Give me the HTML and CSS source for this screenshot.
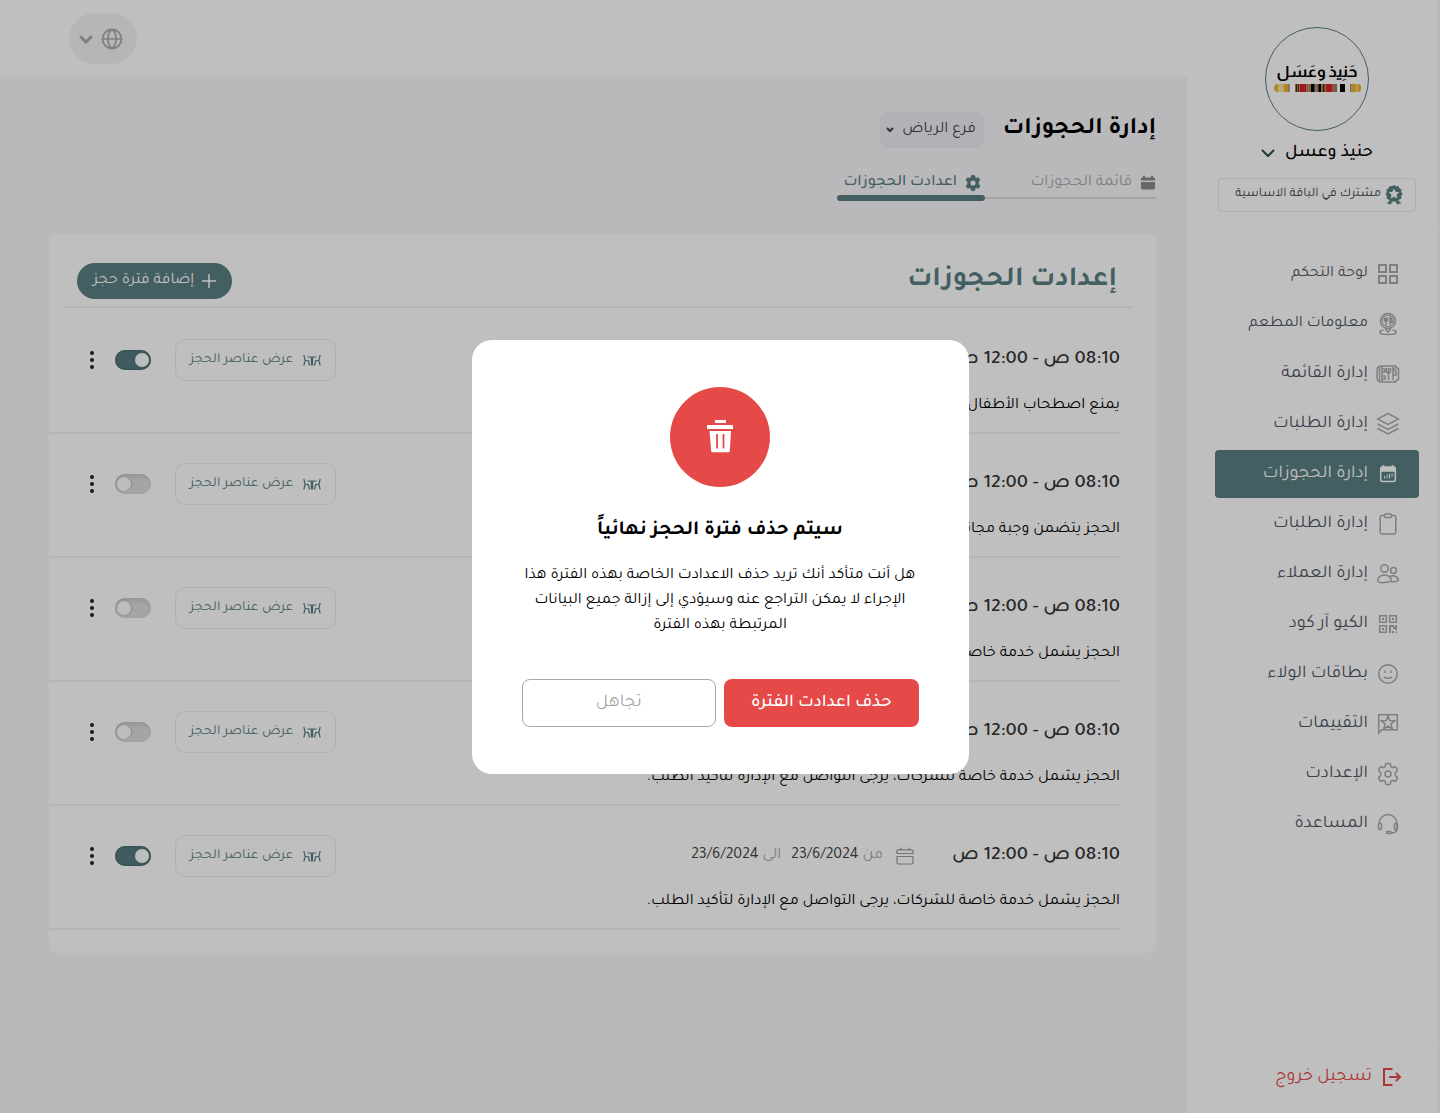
FILE: index.html
```html
<!DOCTYPE html>
<html lang="ar" dir="rtl">
<head>
<meta charset="utf-8">
<meta name="viewport" content="width=device-width, initial-scale=1">
<title>إدارة الحجوزات</title>
<link rel="stylesheet" href="styles.css">
</head>
<body>
<svg class="sprite" aria-hidden="true">
  <symbol id="i-table" viewBox="0 0 18 12">
    <path d="M.8 1l1.400 5.500L.8 11.500M2.200 6.500h3l1.300 5M17.200 1l-1.400 5.500 1.400 5M15.800 6.500h-3l-1.300 5M4.500 3h9M8.400 3v8.500M9.600 3v8.500" fill="none" stroke="currentColor" stroke-width="1.200"/>
  </symbol>
  <symbol id="i-dates" viewBox="0 0 18 18">
    <path d="M1 6.500V4a1.200 1.200 0 0 1 1.200-1.200h13.600A1.200 1.200 0 0 1 17 4v2.500zM1 9.500h16v6.300a1.200 1.200 0 0 1-1.200 1.200H2.200A1.200 1.200 0 0 1 1 15.800zM5 .5v2.300M13 .5v2.300" fill="none" stroke="currentColor" stroke-width="1.200"/>
  </symbol>
  <symbol id="i-dots" viewBox="0 0 4 18">
    <circle cx="2" cy="2" r="2"/><circle cx="2" cy="9" r="2"/><circle cx="2" cy="16" r="2"/>
  </symbol>
  <symbol id="i-gear" viewBox="0 0 24 24">
    <path d="M9.600 2.300a1 1 0 0 1 1-.8h2.800a1 1 0 0 1 1 .8l.4 2.300 1.700 1 2.200-.8a1 1 0 0 1 1.200.4l1.400 2.400a1 1 0 0 1-.2 1.300L19.300 10.400v3.200l1.800 1.500a1 1 0 0 1 .2 1.300l-1.400 2.400a1 1 0 0 1-1.200.4l-2.200-.8-1.700 1-.4 2.300a1 1 0 0 1-1 .8h-2.800a1 1 0 0 1-1-.8l-.4-2.300-1.700-1-2.200.8a1 1 0 0 1-1.200-.4l-1.400-2.400a1 1 0 0 1 .2-1.300l1.800-1.500v-3.200L2.900 8.900a1 1 0 0 1-.2-1.300l1.400-2.400a1 1 0 0 1 1.200-.4l2.200.8 1.700-1z"/>
  </symbol>
</svg>

<div class="app">
  <aside class="sidebar">
    <div class="brand">
      <div class="logo">
        <span class="logo-name">حَنِيذ وعَسَل</span>
        <svg class="logo-band" viewBox="0 0 261 24" aria-hidden="true">
          <path d="M12 0v24a12 12 0 0 1 0-24z" fill="#f0b429"/><path d="M12 0h17v24H12z" fill="#f7df9c"/><path d="M29 0h13v24H29z" fill="#f0b429"/><path d="M42 0h5v24h-5z" fill="#a08a96"/>
          <path d="M63 0h15v24H63z" fill="#a9823a"/><path d="M66 0h3v24h-3zM73 0h2v24h-2z" fill="#3a2a1a"/><path d="M78 0h20v24H78z" fill="#d8222f"/><path d="M98 0h5v24h-5z" fill="#9b8193"/><path d="M103 0h8v24h-8z" fill="#b2832b"/><path d="M111 0h11v24h-11z"/><path d="M122 0h6v24h-6z" fill="#8b8188"/><path d="M128 0h5v24h-5z" fill="#a8792a"/><path d="M133 0h9v24h-9z"/><path d="M142 0h13v24h-13z" fill="#b2832b"/><path d="M147 0h4v24h-4z" fill="#3a2a1a"/><path d="M155 0h21v24h-21z" fill="#d8222f"/><path d="M176 0h13v24h-13z" fill="#a9823a"/><path d="M184 0h5v24h-5z" fill="#8c7787"/>
          <path d="M198 0h15v24h-15z"/>
          <path d="M228 0h5v24h-5z" fill="#a08a96"/><path d="M233 0h14v24h-14z" fill="#f0b429"/><path d="M247 0h3v24h-3z" fill="#f7df9c"/><path d="M250 0a12 12 0 0 1 0 24z" fill="#f0b429"/>
        </svg>
      </div>
      <button class="account" type="button">
        <span>حنيذ وعسل</span>
        <svg width="14" height="8" viewBox="0 0 14 8" aria-hidden="true"><path d="M1 1l6 6 6-6" fill="none" stroke="currentColor" stroke-width="2"/></svg>
      </button>
      <p class="plan">
        <svg width="18" height="20" viewBox="0 0 18 20" aria-hidden="true">
          <path d="M9 0l2 1.300 2.400-.2 1 2.200 2.100 1.200-.3 2.400L17.500 9l-1.300 2 .2 2.400-2.200 1L13 16.500H5l-1.200-2.100-2.200-1 .2-2.400L.5 9l1.300-2.100-.3-2.400 2.100-1.200 1-2.200L7 1.300z" fill="currentColor"/>
          <path d="M9 3.500l1.600 3.300 3.600.5-2.600 2.500.6 3.600L9 11.700l-3.200 1.700.6-3.600-2.600-2.500 3.600-.5z" fill="#fff"/>
          <path d="M4 16l-2.500 2.800 2.500-.2.800 1.400L8 16.800M14 16l2.500 2.800-2.500-.2-.8 1.400-3.200-3.200" fill="currentColor"/>
        </svg>
        <span>مشترك في الباقة الاساسية</span>
      </p>
    </div>

    <nav class="menu" aria-label="القائمة الرئيسية">
      <a class="menu-link menu-link-small" href="#dashboard">
        <svg class="menu-icon" viewBox="0 0 24 24"><path d="M3 3h7v7H3zM14 3h7v7h-7zM3 14h7v7H3zM14 14h7v7h-7z" stroke-width="2"/></svg>
        <span>لوحة التحكم</span>
      </a>
      <a class="menu-link menu-link-small" href="#restaurant">
        <svg class="menu-icon" viewBox="0 0 24 24"><circle cx="12" cy="9" r="7.500"/><circle cx="12" cy="9" r="5.800" stroke-width="1"/><path d="M8.500 5.500v3q1.500 2 3 0v-3M10 5.500v8M14 13.500v-8q2.500 1.500 2 5h-2M9 16.500l3 3.500 3-3.500"/><path d="M7.500 18C1.500 19 2 22.500 12 22.500S22.500 19 16.500 18"/></svg>
        <span>معلومات المطعم</span>
      </a>
      <a class="menu-link" href="#menu">
        <svg class="menu-icon" viewBox="0 0 24 24"><path d="M6 4h13.500q0 2 3 2.500v11q-3 .5-3 2.500H6zM6 4Q1 4 1 8v8q0 4 5 4M3.500 5v14M6 7h3v3H6M6 14h3v3H6"/><path d="M10.500 6v4q2 2.500 4 0V6M12.500 6v12M17 18V6q3.500 2 3 7h-3"/></svg>
        <span>إدارة القائمة</span>
      </a>
      <a class="menu-link" href="#orders">
        <svg class="menu-icon" viewBox="0 0 24 24"><path d="M12 1.500l10.500 5.500L12 12.500 1.500 7zM1.500 12L12 17.500 22.500 12M1.500 16.500L12 22l10.500-5.500"/></svg>
        <span>إدارة الطلبات</span>
      </a>
      <a class="menu-link is-active" href="#bookings" aria-current="page">
        <svg class="menu-icon" viewBox="0 0 24 24"><path d="M4.700 9V6.500A1.500 1.500 0 0 1 6.200 5h11.600a1.500 1.500 0 0 1 1.500 1.500V9z" fill="currentColor"/><path d="M4.700 9v9a1.500 1.500 0 0 0 1.500 1.500h11.600a1.500 1.500 0 0 0 1.500-1.500V9M7.500 3v3M16.500 3v3"/><path d="M8.500 16.500V14M11 16.500v-4M13.500 16.500v-5M16 15v-3.500" stroke-width="1"/></svg>
        <span>إدارة الحجوزات</span>
      </a>
      <a class="menu-link" href="#requests">
        <svg class="menu-icon" viewBox="0 0 24 24"><path d="M8.500 3.500H6A1.800 1.800 0 0 0 4.200 5.300v15A1.800 1.800 0 0 0 6 22h12a1.800 1.800 0 0 0 1.800-1.700v-15A1.800 1.800 0 0 0 18 3.500h-2.500"/><rect x="8.500" y="2" width="7" height="3.500" rx="1.200"/></svg>
        <span>إدارة الطلبات</span>
      </a>
      <a class="menu-link" href="#customers">
        <svg class="menu-icon" viewBox="0 0 24 24"><circle cx="8.500" cy="6.500" r="3.700"/><circle cx="17.500" cy="8.500" r="2.900"/><path d="M1.700 18.500c0-3 3-5.500 6.800-5.500s6.800 2.500 6.800 5.500c0 1.800-13.600 3.800-13.600 0zM14 14.500c4-1.800 8.300.5 8.300 3.500 0 1.200-2.800 1.900-7 1.600"/></svg>
        <span>إدارة العملاء</span>
      </a>
      <a class="menu-link" href="#qr">
        <svg class="menu-icon" viewBox="0 0 24 24"><path d="M3.700 3.700h6.600v6.600H3.700zM13.700 3.700h6.600v6.600h-6.600zM3.700 13.700h6.600v6.600H3.700z"/><path d="M6 6h2v2H6zM16 6h2v2h-2zM6 16h2v2H6zM13 13h5v2h1v-2h2v5h-2v-1h-2v-2h-2v6h-2zM16 19h2v2h-2zM19.500 19.500H21V21h-1.500z" fill="currentColor" stroke="none"/></svg>
        <span>الكيو آر كود</span>
      </a>
      <a class="menu-link" href="#loyalty">
        <svg class="menu-icon" viewBox="0 0 24 24"><circle cx="12" cy="12" r="9.300"/><path d="M9.200 8.500v2.500M14.800 8.500v2.500M8 14.800q4 3 8 0"/></svg>
        <span>بطاقات الولاء</span>
      </a>
      <a class="menu-link" href="#reviews">
        <svg class="menu-icon" viewBox="0 0 24 24"><path d="M2.700 21V2.700h18.600v15H5.700z"/><path d="M12 4l1.800 4.600 4.900.3-3.800 3.100 1.300 4.800L12 14.100l-4.200 2.700L9.100 12 5.300 8.900l4.900-.3z"/></svg>
        <span>التقييمات</span>
      </a>
      <a class="menu-link" href="#settings">
        <svg class="menu-icon" viewBox="0 0 24 24"><use href="#i-gear"/><circle cx="12" cy="12" r="3"/></svg>
        <span>الإعدادت</span>
      </a>
      <a class="menu-link" href="#help">
        <svg class="menu-icon" viewBox="0 0 24 24"><path d="M3 12a9 9.500 0 0 1 18 0v4.500q0 4.500-6 4.500"/><rect x="2.500" y="11.500" width="3" height="6" rx="1"/><rect x="18.500" y="11.500" width="3" height="6" rx="1"/><rect x="10.500" y="19.500" width="4.500" height="2" rx="1"/></svg>
        <span>المساعدة</span>
      </a>
    </nav>

    <div class="sidebar-foot">
      <a class="logout" href="#logout">
        <svg width="20" height="20" viewBox="0 0 20 20" aria-hidden="true"><path d="M10.500 2H2v16h8.500M7 10h11M14 6l4 4-4 4" fill="none" stroke="currentColor" stroke-width="2"/></svg>
        <span>تسجيل خروج</span>
      </a>
    </div>
  </aside>

  <div class="page">
    <header class="topbar">
      <button class="language" type="button" aria-label="اللغة">
        <svg width="22" height="22" viewBox="0 0 22 22" aria-hidden="true"><circle cx="11" cy="11" r="9.500" fill="none" stroke="currentColor" stroke-width="1.800"/><path d="M11 1.500c-5.500 4-5.500 15 0 19M11 1.500c5.500 4 5.500 15 0 19M1.500 11h19" fill="none" stroke="currentColor" stroke-width="1.600"/></svg>
        <svg width="14" height="10" viewBox="0 0 14 10" aria-hidden="true"><path d="M2 3l5 5 5-5" fill="none" stroke="currentColor" stroke-width="3" stroke-linecap="round"/></svg>
      </button>
    </header>

    <main class="content">
      <div class="title-row">
        <h1 class="page-title">إدارة الحجوزات</h1>
        <div class="branch">
          <select class="branch-select" aria-label="الفرع"><option>فرع الرياض</option></select>
          <svg class="branch-arrow" width="8" height="6" viewBox="0 0 8 6" aria-hidden="true"><path d="M1 1l3 3 3-3" fill="none" stroke="currentColor" stroke-width="2"/></svg>
        </div>
      </div>

      <nav class="tabs" aria-label="أقسام الحجوزات">
        <a class="tab" href="#list">
          <svg class="tab-icon" viewBox="0 0 16 16"><path d="M1 5.500V4a1.500 1.500 0 0 1 1.500-1.500H3V.8h2v1.700h6V.8h2v1.700h.5A1.500 1.500 0 0 1 15 4v1.500zM1 7h14v6a1.500 1.500 0 0 1-1.500 1.500h-11A1.500 1.500 0 0 1 1 13z" fill="#8a8a8a"/></svg>
          <span>قائمة الحجوزات</span>
        </a>
        <a class="tab is-current" href="#periods" aria-current="page">
          <svg class="tab-icon" viewBox="1 1 22 22"><use href="#i-gear" width="24" height="24" fill="currentColor" stroke="currentColor"/><circle cx="12" cy="12" r="3.500" fill="#f7f7fa"/></svg>
          <span>اعدادت الحجوزات</span>
        </a>
      </nav>

      <section class="card" id="periods">
        <div class="card-head">
          <h2 class="card-title">إعدادت الحجوزات</h2>
          <button class="add" type="button">
            <svg width="14" height="14" viewBox="0 0 14 14" aria-hidden="true"><path d="M7 0v14M0 7h14" stroke="currentColor" stroke-width="1.500"/></svg>
            <span>إضافة فترة حجز</span>
          </button>
        </div>
        <ul class="periods">
          <li class="period">
            <div class="period-line">
              <h3 class="period-time">08:10 ص - 12:00 ص</h3>
              <div class="period-tools">
                <button class="view" type="button"><svg class="view-icon"><use href="#i-table"/></svg><span>عرض عناصر الحجز</span></button>
                <input class="toggle" type="checkbox" aria-label="تفعيل الفترة" checked>
                <button class="more" type="button" aria-label="خيارات"><svg class="more-icon"><use href="#i-dots"/></svg></button>
              </div>
            </div>
            <p class="period-note">يمنع اصطحاب الأطفال</p>
          </li>
          <li class="period">
            <div class="period-line">
              <h3 class="period-time">08:10 ص - 12:00 ص</h3>
              <div class="period-tools">
                <button class="view" type="button"><svg class="view-icon"><use href="#i-table"/></svg><span>عرض عناصر الحجز</span></button>
                <input class="toggle" type="checkbox" aria-label="تفعيل الفترة">
                <button class="more" type="button" aria-label="خيارات"><svg class="more-icon"><use href="#i-dots"/></svg></button>
              </div>
            </div>
            <p class="period-note">الحجز يتضمن وجبة مجانية</p>
          </li>
          <li class="period">
            <div class="period-line">
              <h3 class="period-time">08:10 ص - 12:00 ص</h3>
              <div class="period-tools">
                <button class="view" type="button"><svg class="view-icon"><use href="#i-table"/></svg><span>عرض عناصر الحجز</span></button>
                <input class="toggle" type="checkbox" aria-label="تفعيل الفترة">
                <button class="more" type="button" aria-label="خيارات"><svg class="more-icon"><use href="#i-dots"/></svg></button>
              </div>
            </div>
            <p class="period-note">الحجز يشمل خدمة خاصة</p>
          </li>
          <li class="period">
            <div class="period-line">
              <h3 class="period-time">08:10 ص - 12:00 ص</h3>
              <div class="period-tools">
                <button class="view" type="button"><svg class="view-icon"><use href="#i-table"/></svg><span>عرض عناصر الحجز</span></button>
                <input class="toggle" type="checkbox" aria-label="تفعيل الفترة">
                <button class="more" type="button" aria-label="خيارات"><svg class="more-icon"><use href="#i-dots"/></svg></button>
              </div>
            </div>
            <p class="period-note">الحجز يشمل خدمة خاصة للشركات، يرجى التواصل مع الإدارة لتأكيد الطلب.</p>
          </li>
          <li class="period">
            <div class="period-line">
              <h3 class="period-time">08:10 ص - 12:00 ص</h3>
              <p class="period-dates"><svg class="dates-icon"><use href="#i-dates"/></svg><span>من <b>23/6/2024</b></span><span>الى <b>23/6/2024</b></span></p>
              <div class="period-tools">
                <button class="view" type="button"><svg class="view-icon"><use href="#i-table"/></svg><span>عرض عناصر الحجز</span></button>
                <input class="toggle" type="checkbox" aria-label="تفعيل الفترة" checked>
                <button class="more" type="button" aria-label="خيارات"><svg class="more-icon"><use href="#i-dots"/></svg></button>
              </div>
            </div>
            <p class="period-note">الحجز يشمل خدمة خاصة للشركات، يرجى التواصل مع الإدارة لتأكيد الطلب.</p>
          </li>
        </ul>
      </section>
    </main>
  </div>
</div>

<div class="overlay">
  <div class="modal" role="dialog" aria-modal="true" aria-labelledby="modal-title">
    <div class="modal-icon">
      <svg width="28" height="34" viewBox="0 0 28 34" aria-hidden="true">
        <path d="M9 0h11v3H9zM2 5h24a1 1 0 0 1 1 1v3H1V6a1 1 0 0 1 1-1z" fill="#fff"/>
        <path d="M3.500 11H25l-1.200 20a1.500 1.500 0 0 1-1.500 1.300H6.700A1.500 1.500 0 0 1 5.200 31z" fill="#fff"/>
        <path d="M11 14v14.500M17.500 14v14.500" stroke="#e54a49" stroke-width="1.800"/>
      </svg>
    </div>
    <h2 class="modal-title" id="modal-title">سيتم حذف فترة الحجز نهائياً</h2>
    <p class="modal-text">هل أنت متأكد أنك تريد حذف الاعدادت الخاصة بهذه الفترة هذا الإجراء لا يمكن التراجع عنه وسيؤدي إلى إزالة جميع البيانات المرتبطة بهذه الفترة</p>
    <div class="modal-actions">
      <button class="btn btn-danger" type="button">حذف اعدادت الفترة</button>
      <button class="btn btn-ghost" type="button">تجاهل</button>
    </div>
  </div>
</div>
</body>
</html>
```
FILE: styles.css
```css
:root {
  --brand: #5b7f83;
  --danger: #e54a49;
  --line: #f2f2f2;
  --muted: #aaa;
}

* {
  box-sizing: border-box;
}

body,
h1,
h2,
h3,
p,
ul {
  margin: 0;
}

body {
  background: #f7f7fa;
  color: #000;
  font-family: Tajawal, "Noto Sans", "DejaVu Sans", sans-serif;
  font-size: 16px;
  line-height: 24px;
}

button,
select {
  border: 0;
  padding: 0;
  background: none;
  color: inherit;
  font: inherit;
  cursor: pointer;
}

a {
  color: inherit;
  text-decoration: none;
}

svg {
  flex: none;
}

.sprite {
  display: none;
}

.app {
  display: grid;
  grid-template-columns: 253px minmax(0, 1fr);
  min-height: 100vh;
}

/* Sidebar */

.sidebar {
  display: flex;
  flex-direction: column;
  border-right: 3px solid #f7f7f7;
  padding-left: 4px;
  background: #fff;
}

.brand {
  display: flex;
  flex-direction: column;
  align-items: center;
  border-bottom: 2px solid #fbfbfb;
  padding: 27px 0 15px 6px;
}

.logo {
  display: flex;
  flex-direction: column;
  align-items: center;
  justify-content: center;
  width: 104px;
  height: 104px;
  border: 1px solid var(--brand);
  border-radius: 50%;
  padding-bottom: 6px;
}

.logo-name {
  font-family: Almarai, Tajawal, sans-serif;
  font-size: 16px;
  font-weight: 700;
  line-height: 24px;
}

.logo-band {
  width: 87px;
  height: 8px;
}

.account {
  display: flex;
  align-items: center;
  gap: 10px;
  margin: 10px 0 13px;
  font-size: 18px;
  font-weight: 500;
}

.account svg {
  color: #2c4a4e;
}

.plan {
  display: flex;
  align-items: center;
  gap: 4px;
  width: 198px;
  height: 34px;
  border: 1px solid #eaeaea;
  border-radius: 4px;
  padding: 0 12px;
  color: #444;
  font-size: 13px;
}

.plan svg {
  color: var(--brand);
}

.menu {
  display: flex;
  flex-direction: column;
  gap: 2px;
  padding: 21px 18px 21px 24px;
}

.menu-link {
  display: flex;
  align-items: center;
  gap: 8px;
  height: 48px;
  border-radius: 4px;
  padding: 0 19px;
  color: #4f5866;
  font-size: 18px;
}

.menu-link-small {
  font-size: 16px;
}

.menu-icon {
  width: 24px;
  height: 24px;
  fill: none;
  stroke: var(--muted);
  stroke-width: 1.5;
  color: var(--muted);
}

.menu-link.is-active {
  background: var(--brand);
  color: #fff;
}

.is-active .menu-icon {
  stroke: #fff;
  color: #fff;
}

.sidebar-foot {
  margin-top: auto;
  border-top: 2px solid #fbfbfb;
  padding: 20px 35px 24px;
}

.logout {
  display: flex;
  align-items: center;
  gap: 10px;
  color: var(--danger);
  font-size: 18px;
}

/* Page */

.topbar {
  display: flex;
  align-items: center;
  justify-content: flex-end;
  height: 77px;
  padding-left: 69px;
  background: #fff;
}

.language {
  display: flex;
  align-items: center;
  justify-content: center;
  gap: 8px;
  width: 68px;
  height: 51px;
  border-radius: 26px;
  padding-right: 4px;
  background: #f3f3f5;
  color: var(--muted);
}

.content {
  padding: 35px 31px 32px 49px;
}

.title-row {
  display: flex;
  align-items: center;
  gap: 19px;
}

.page-title {
  font-size: 24px;
  font-weight: 700;
  line-height: 36px;
}

.branch {
  display: flex;
  align-items: center;
  gap: 8px;
  height: 36px;
  border-radius: 8px;
  padding: 0 8px 0 6px;
  background: #edeef3;
  color: #444;
}

.branch-select {
  appearance: none;
}

.branch-arrow {
  pointer-events: none;
}

.tabs {
  display: flex;
  margin: 20px 0 33px;
}

.tab {
  display: grid;
  grid-template-columns: 16px 1fr;
  grid-template-rows: 27px 6px;
  column-gap: 8px;
  align-items: end;
  width: 171px;
  color: var(--muted);
}

.tab::after {
  content: "";
  grid-column: 1 / -1;
  align-self: center;
  height: 2px;
  background: #d9d9dc;
}

.tab.is-current {
  width: 148px;
  color: var(--brand);
  font-weight: 500;
}

.tab.is-current > * {
  margin-right: 4px;
  margin-left: -4px;
}

.tab.is-current::after {
  height: 6px;
  border-radius: 3px;
  background: var(--brand);
}

.tab-icon {
  width: 16px;
  height: 24px;
}

.card {
  border-radius: 8px;
  padding-bottom: 23px;
  background: #fff;
}

.card-head {
  display: flex;
  align-items: center;
  justify-content: space-between;
  margin: 0 23px 0 14px;
  border-bottom: 2px solid var(--line);
  padding: 29px 16px 7px 14px;
}

.card-title {
  color: var(--brand);
  font-size: 28px;
  font-weight: 700;
  line-height: 36px;
}

.add {
  display: flex;
  align-items: center;
  justify-content: center;
  gap: 8px;
  height: 36px;
  border-radius: 18px;
  padding: 0 16px;
  background: var(--brand);
  color: #fff;
}

.periods {
  margin-right: 36px;
  padding: 2px 0 0;
  list-style: none;
}

.period {
  border-bottom: 2px solid var(--line);
  padding: 29px 0 14px 35px;
}

.period-line {
  display: flex;
  align-items: center;
  gap: 38px;
  height: 42px;
}

.period-time {
  color: #333;
  font-size: 20px;
  font-weight: 500;
}

.period-dates {
  display: flex;
  align-items: center;
  gap: 10px;
  color: var(--muted);
}

.period-dates b {
  color: #444;
  font-weight: 400;
}

.dates-icon {
  width: 18px;
  height: 18px;
  margin-left: 3px;
  color: #999;
}

.period-tools {
  display: flex;
  align-items: center;
  gap: 15px;
  margin-right: auto;
}

.view {
  display: flex;
  align-items: center;
  justify-content: center;
  gap: 10px;
  width: 161px;
  height: 42px;
  margin-left: 9px;
  border: 1px solid #ededed;
  border-radius: 10px;
  color: var(--brand);
  font-size: 14px;
}

.view-icon {
  width: 18px;
  height: 12px;
}

.toggle {
  appearance: none;
  width: 36px;
  height: 20px;
  margin: 0;
  border-radius: 10px;
  padding: 3px 2px;
  background: #dcdcdc;
  box-shadow: inset 2px 2px 4px #c0c0c0;
  cursor: pointer;
}

.toggle::before {
  content: "";
  display: block;
  width: 14px;
  height: 14px;
  margin-right: auto;
  border-radius: 50%;
  background: #fcfcfc;
  box-shadow: 1px 0 2px #b4b4b4;
}

.toggle:checked {
  background: #547a7e;
  box-shadow: inset 0 0 3px #3c5e62;
}

.toggle:checked::before {
  margin-right: 0;
  box-shadow: none;
}

.more {
  width: 16px;
  height: 24px;
}

.more-icon {
  display: block;
  width: 4px;
  height: 18px;
  margin: auto;
  fill: #222;
}

.period-note {
  margin-top: 13px;
}

/* Confirmation dialog */

.overlay {
  position: fixed;
  inset: 0;
  display: flex;
  align-items: center;
  justify-content: center;
  background: rgba(0, 0, 0, 0.25);
}

.modal {
  display: flex;
  flex-direction: column;
  align-items: center;
  width: 497px;
  max-width: 100%;
  border-radius: 20px;
  padding: 47px 50px;
  background: #fff;
  text-align: center;
}

.modal-icon {
  display: flex;
  align-items: center;
  justify-content: center;
  width: 100px;
  height: 100px;
  border-radius: 50%;
  background: var(--danger);
}

.modal-title {
  margin: 29px 0 18px;
  font-size: 20px;
  font-weight: 700;
  line-height: 30px;
}

.modal-text {
  line-height: 25px;
}

.modal-actions {
  display: grid;
  grid-template-columns: 1fr 1fr;
  gap: 8px;
  align-self: stretch;
  margin-top: 40px;
}

.btn {
  height: 48px;
  border-radius: 8px;
  font-size: 18px;
}

.btn-danger {
  background: var(--danger);
  color: #fff;
  font-weight: 500;
}

.btn-ghost {
  border: 1px solid #a6a6a6;
  color: #a6a6a6;
}
```
